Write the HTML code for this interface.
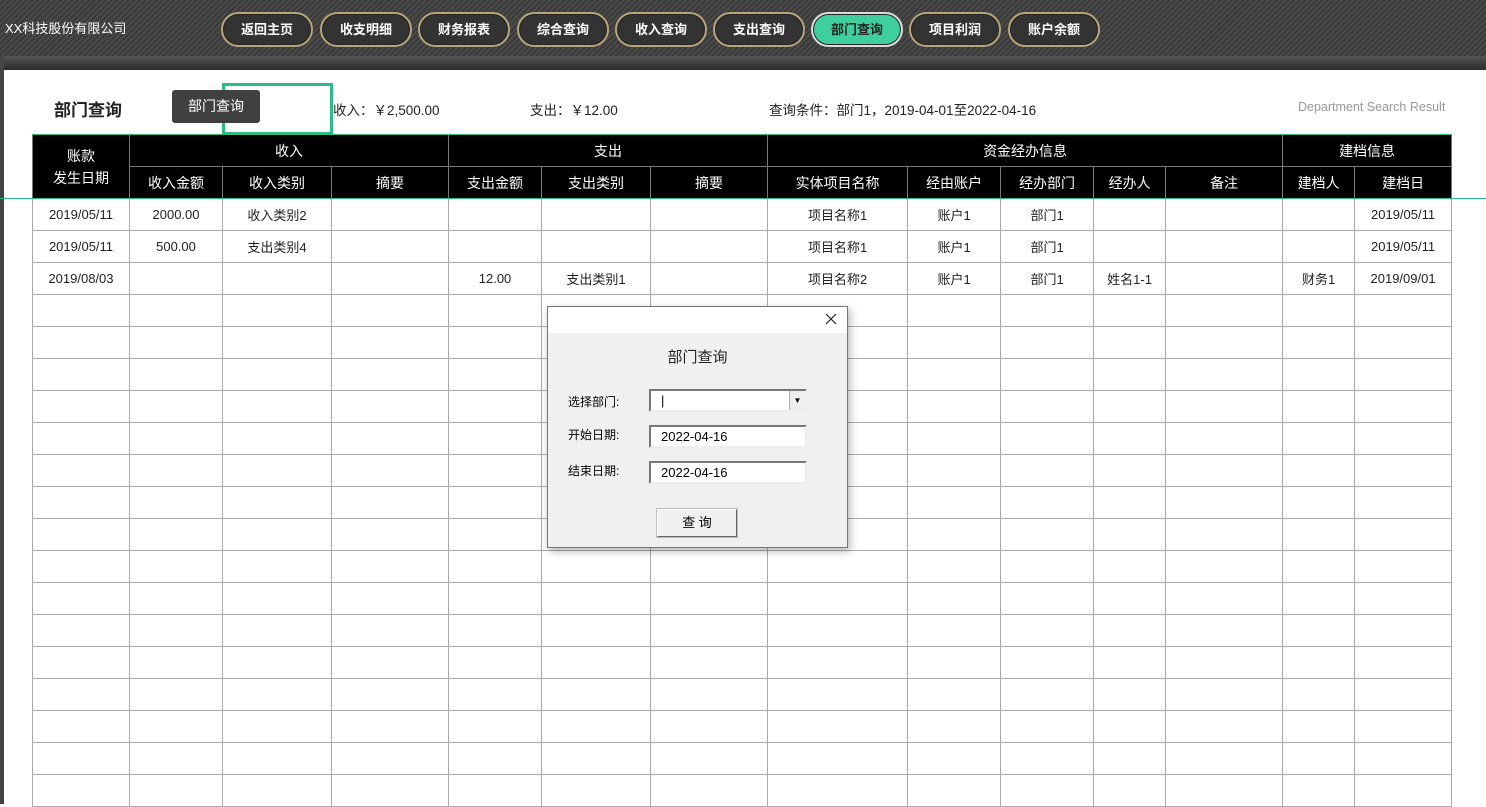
<!DOCTYPE html>
<html><head><meta charset="utf-8"><style>
*{margin:0;padding:0;box-sizing:border-box}
body{width:1486px;height:804px;overflow:hidden;font-family:"Liberation Sans","Noto Sans CJK SC",sans-serif;background:#fff;position:relative}
.top{position:absolute;left:0;top:0;width:1486px;height:70px;background:repeating-linear-gradient(135deg,#4a4a4a 0 2px,#3a3a3a 2px 4px)}
.band{position:absolute;left:0;top:56px;width:1486px;height:14px;background:linear-gradient(#555,#2a2a2a)}
.side{position:absolute;left:0;top:56px;width:4px;height:748px;background:#444}
.logo{position:absolute;left:5px;top:18px;color:#fff;font-size:13px}
.btn{position:absolute;top:12px;height:35px;width:92px;border-radius:18px;background:#333;border:2px solid #b9a57a;color:#fff;font-size:13px;font-weight:bold;text-align:center;line-height:31px;box-shadow:inset 0 0 0 1px #222}
.btn.act{background:#3fcf9f;color:#222;border-color:#ddd}
.t{position:absolute;font-size:13.5px;color:#222}
table{position:absolute;left:32px;top:134px;border-collapse:collapse;table-layout:fixed;width:1419px}
td{border:1px solid #aaa;height:32px;font-size:13px;text-align:center;color:#222;padding:0}
tr.h td{background:#000;color:#fff;border-color:#777;font-size:14px}
.dlg{position:absolute;left:547px;top:306px;width:301px;height:242px;background:#f0f0f0;border:1px solid #777;box-shadow:2px 3px 8px rgba(0,0,0,.3)}
.dlg .tb{height:26px;background:#fff}
.in{position:absolute;left:101px;width:158px;height:23px;background:#fff;border:2px solid;border-color:#777 #eee #eee #777;font-size:13px;padding-left:10px;line-height:19px}
.lb{position:absolute;left:20px;font-size:12px}
</style></head><body>
<div class="top"></div><div class="band"></div><div class="side"></div>
<div class="logo">XX科技股份有限公司</div>
<div class="btn" style="left:221px">返回主页</div>
<div class="btn" style="left:320px">收支明细</div>
<div class="btn" style="left:418px">财务报表</div>
<div class="btn" style="left:517px">综合查询</div>
<div class="btn" style="left:615px">收入查询</div>
<div class="btn" style="left:713px">支出查询</div>
<div class="btn act" style="left:811px">部门查询</div>
<div class="btn" style="left:909px">项目利润</div>
<div class="btn" style="left:1008px">账户余额</div>
<div class="t" style="left:54px;top:96px;font-size:17px;font-weight:bold">部门查询</div>
<div style="position:absolute;left:222px;top:83px;width:111px;height:52px;border:3px solid #2dbb85"></div>
<div style="position:absolute;left:172px;top:90px;width:88px;height:33px;background:#404040;border-radius:3px;color:#fff;font-size:14px;line-height:33px;text-align:center">部门查询</div>
<div class="t" style="left:333px;top:99px">收入：￥2,500.00</div>
<div class="t" style="left:530px;top:99px">支出：￥12.00</div>
<div class="t" style="left:769px;top:99px">查询条件：部门1，2019-04-01至2022-04-16</div>
<div class="t" style="left:1298px;top:100px;font-size:12.5px;color:#999">Department Search Result</div>
<table>
<colgroup><col style="width:97px"><col style="width:93px"><col style="width:109px"><col style="width:117px"><col style="width:93px"><col style="width:109px"><col style="width:117px"><col style="width:140px"><col style="width:93px"><col style="width:93px"><col style="width:72px"><col style="width:117px"><col style="width:72px"><col style="width:97px"></colgroup>
<tr class="h"><td rowspan="2" style="line-height:22px">账款<br>发生日期</td><td colspan="3">收入</td><td colspan="3">支出</td><td colspan="5">资金经办信息</td><td colspan="2">建档信息</td></tr>
<tr class="h"><td>收入金额</td><td>收入类别</td><td>摘要</td><td>支出金额</td><td>支出类别</td><td>摘要</td><td>实体项目名称</td><td>经由账户</td><td>经办部门</td><td>经办人</td><td>备注</td><td>建档人</td><td>建档日</td></tr>
<tr><td>2019/05/11</td><td>2000.00</td><td>收入类别2</td><td></td><td></td><td></td><td></td><td>项目名称1</td><td>账户1</td><td>部门1</td><td></td><td></td><td></td><td>2019/05/11</td></tr>
<tr><td>2019/05/11</td><td>500.00</td><td>支出类别4</td><td></td><td></td><td></td><td></td><td>项目名称1</td><td>账户1</td><td>部门1</td><td></td><td></td><td></td><td>2019/05/11</td></tr>
<tr><td>2019/08/03</td><td></td><td></td><td></td><td>12.00</td><td>支出类别1</td><td></td><td>项目名称2</td><td>账户1</td><td>部门1</td><td>姓名1-1</td><td></td><td>财务1</td><td>2019/09/01</td></tr>
<tr><td></td><td></td><td></td><td></td><td></td><td></td><td></td><td></td><td></td><td></td><td></td><td></td><td></td><td></td></tr>
<tr><td></td><td></td><td></td><td></td><td></td><td></td><td></td><td></td><td></td><td></td><td></td><td></td><td></td><td></td></tr>
<tr><td></td><td></td><td></td><td></td><td></td><td></td><td></td><td></td><td></td><td></td><td></td><td></td><td></td><td></td></tr>
<tr><td></td><td></td><td></td><td></td><td></td><td></td><td></td><td></td><td></td><td></td><td></td><td></td><td></td><td></td></tr>
<tr><td></td><td></td><td></td><td></td><td></td><td></td><td></td><td></td><td></td><td></td><td></td><td></td><td></td><td></td></tr>
<tr><td></td><td></td><td></td><td></td><td></td><td></td><td></td><td></td><td></td><td></td><td></td><td></td><td></td><td></td></tr>
<tr><td></td><td></td><td></td><td></td><td></td><td></td><td></td><td></td><td></td><td></td><td></td><td></td><td></td><td></td></tr>
<tr><td></td><td></td><td></td><td></td><td></td><td></td><td></td><td></td><td></td><td></td><td></td><td></td><td></td><td></td></tr>
<tr><td></td><td></td><td></td><td></td><td></td><td></td><td></td><td></td><td></td><td></td><td></td><td></td><td></td><td></td></tr>
<tr><td></td><td></td><td></td><td></td><td></td><td></td><td></td><td></td><td></td><td></td><td></td><td></td><td></td><td></td></tr>
<tr><td></td><td></td><td></td><td></td><td></td><td></td><td></td><td></td><td></td><td></td><td></td><td></td><td></td><td></td></tr>
<tr><td></td><td></td><td></td><td></td><td></td><td></td><td></td><td></td><td></td><td></td><td></td><td></td><td></td><td></td></tr>
<tr><td></td><td></td><td></td><td></td><td></td><td></td><td></td><td></td><td></td><td></td><td></td><td></td><td></td><td></td></tr>
<tr><td></td><td></td><td></td><td></td><td></td><td></td><td></td><td></td><td></td><td></td><td></td><td></td><td></td><td></td></tr>
<tr><td></td><td></td><td></td><td></td><td></td><td></td><td></td><td></td><td></td><td></td><td></td><td></td><td></td><td></td></tr>
<tr><td></td><td></td><td></td><td></td><td></td><td></td><td></td><td></td><td></td><td></td><td></td><td></td><td></td><td></td></tr>
</table>
<div style="position:absolute;left:0;top:198px;width:1486px;height:1px;background:#2dbb85"></div>
<div style="position:absolute;left:32px;top:134px;width:1419px;height:1px;background:#2dbb85"></div>
<div class="dlg">
<div class="tb"><svg style="position:absolute;right:10px;top:6px" width="12" height="12"><path d="M1 1L11 11M11 1L1 11" stroke="#222" stroke-width="1.2"/></svg></div>
<div style="position:absolute;left:0;width:100%;top:39px;text-align:center;font-size:15px;color:#222">部门查询</div>
<div class="lb" style="top:86px">选择部门:</div>
<div class="in" style="top:82px">|<span style="position:absolute;right:0;top:0;width:16px;height:19px;background:#eee;border-left:1px solid #aaa;font-size:8px;text-align:center">▼</span></div>
<div class="lb" style="top:119px">开始日期:</div>
<div class="in" style="top:118px">2022-04-16</div>
<div class="lb" style="top:155px">结束日期:</div>
<div class="in" style="top:154px">2022-04-16</div>
<div style="position:absolute;left:109px;top:202px;width:80px;height:28px;background:#f0f0f0;border:1px solid;border-color:#fff #666 #666 #fff;box-shadow:0 0 0 1px #bbb;font-size:13px;text-align:center;line-height:26px">查 询</div>
</div>
</body></html>
